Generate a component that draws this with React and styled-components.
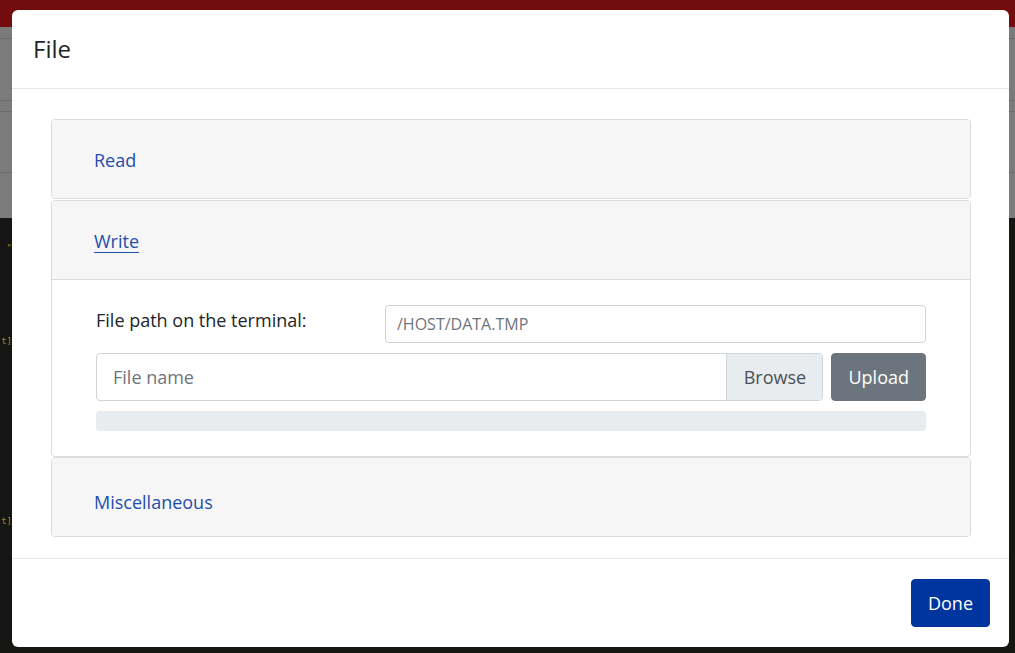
import React from 'react';
import styled, { createGlobalStyle } from 'styled-components';

const GlobalStyle = createGlobalStyle`
  html, body {
    margin: 0;
    padding: 0;
    overflow: hidden;
  }
  body {
    font-family: "Open Sans", "Noto Sans", sans-serif;
    color: #212529;
  }
  * { box-sizing: border-box; }
`;

const Page = styled.div`
  position: relative;
  width: 1015px;
  height: 653px;
  display: flex;
  flex-direction: column;
  background: #151513;
  overflow: hidden;
`;

const TopBar = styled.div`
  height: 27px;
  background: #730d0d;
`;

const GrayBand = styled.div`
  height: 191px;
  background: #7b7b7b;
  display: flex;
  flex-direction: column;
`;

const BandLine = styled.div`
  height: 1px;
  background: #6a6a6a;
  margin-top: ${p => p.$gap}px;
`;

const CodeArea = styled.div`
  flex: 1;
  width: 12px;
  display: flex;
  flex-direction: column;
  align-items: flex-end;
  font-family: "DejaVu Sans Mono", monospace;
  font-size: 9px;
  color: #8c8a3a;
  line-height: 16px;
`;

const CodeLine = styled.div`
  margin-top: ${p => p.$gap}px;
  white-space: nowrap;
`;

const Modal = styled.div`
  position: absolute;
  left: 12px;
  top: 10px;
  width: 997px;
  height: 637px;
  background: #fff;
  border-radius: 6px;
  display: flex;
  flex-direction: column;
`;

const Header = styled.div`
  height: 79px;
  padding: 0 21px;
  display: flex;
  align-items: center;
  border-bottom: 1px solid #e6e6e6;
`;

const Title = styled.h4`
  margin: 0 0 2px;
  font-size: 24px;
  font-weight: 400;
  color: #212529;
`;

const Body = styled.div`
  flex: 1;
  padding: 30px 38px 0 39px;
  border-bottom: 1px solid #e6e6e6;
`;

const Card = styled.div`
  border: 1px solid #dcdcdc;
  border-radius: 4px;
  overflow: hidden;
  margin-bottom: ${p => (p.$gap ? 1 : 0)}px;
`;

const CardHeader = styled.div`
  height: ${p => (p.$open ? 79 : 78)}px;
  background: #f6f6f6;
  padding: ${p => p.$shift || 0}px 42px 0;
  display: flex;
  align-items: center;
  border-bottom: ${p => (p.$open ? '1px solid #dcdcdc' : 'none')};
`;

const HeaderLink = styled.a`
  font-size: 18px;
  color: #1e4eab;
  text-decoration: ${p => (p.$active ? 'underline' : 'none')};
  text-underline-offset: 4px;
  cursor: pointer;
`;

const CardBody = styled.div`
  padding: 25px 44px 25px 44px;
  display: flex;
  flex-direction: column;
`;

const FieldRow = styled.div`
  display: grid;
  grid-template-columns: 289px 1fr;
  align-items: center;
`;

const Label = styled.label`
  font-size: 18px;
  color: #212529;
  margin-top: -8px;
`;

const TextInput = styled.input`
  height: 38px;
  border: 1px solid #ced4da;
  border-radius: 4px;
  padding: 0 11px;
  font-family: inherit;
  font-size: 16px;
  color: #495057;
  &::placeholder { color: #6c757d; }
`;

const UploadRow = styled.div`
  margin-top: 10px;
  display: flex;
  gap: 8px;
  height: 48px;
`;

const FileGroup = styled.div`
  flex: 1;
  display: flex;
  border: 1px solid #ced4da;
  border-radius: 4px;
  overflow: hidden;
`;

const FileName = styled.div`
  flex: 1;
  padding: 0 16px;
  display: flex;
  align-items: center;
  font-size: 18px;
  color: #6c757d;
`;

const Browse = styled.div`
  width: 96px;
  border-left: 1px solid #ced4da;
  background: #e9ecef;
  display: flex;
  align-items: center;
  justify-content: center;
  font-size: 18px;
  color: #495057;
`;

const Button = styled.button`
  height: 48px;
  padding: 0 16px;
  border: 1px solid ${p => p.$bg};
  border-radius: 4px;
  background: ${p => p.$bg};
  color: #fff;
  font-family: inherit;
  font-size: 18px;
`;

const Progress = styled.div`
  margin-top: 10px;
  height: 20px;
  background: #e9ecef;
  border-radius: 4px;
`;

const Footer = styled.div`
  height: 88px;
  padding: 0 19px;
  display: flex;
  align-items: center;
  justify-content: flex-end;
`;

export default function App() {
  return (
    <>
      <GlobalStyle />
      <Page>
        <TopBar />
        <GrayBand>
          <BandLine $gap={11} />
          <BandLine $gap={61} />
          <BandLine $gap={10} />
          <BandLine $gap={60} />
        </GrayBand>
        <CodeArea>
          <CodeLine $gap={22}>"</CodeLine>
          <CodeLine $gap={77}>t]</CodeLine>
          <CodeLine $gap={164}>t]</CodeLine>
        </CodeArea>
        <Modal>
          <Header>
            <Title>File</Title>
          </Header>
          <Body>
            <Card $gap>
              <CardHeader $shift={2}>
                <HeaderLink>Read</HeaderLink>
              </CardHeader>
            </Card>
            <Card>
              <CardHeader $open $shift={2}>
                <HeaderLink $active>Write</HeaderLink>
              </CardHeader>
              <CardBody>
                <FieldRow>
                  <Label>File path on the terminal:</Label>
                  <TextInput placeholder="/HOST/DATA.TMP" />
                </FieldRow>
                <UploadRow>
                  <FileGroup>
                    <FileName>File name</FileName>
                    <Browse>Browse</Browse>
                  </FileGroup>
                  <Button $bg="#6c757d">Upload</Button>
                </UploadRow>
                <Progress />
              </CardBody>
            </Card>
            <Card>
              <CardHeader $shift={9}>
                <HeaderLink>Miscellaneous</HeaderLink>
              </CardHeader>
            </Card>
          </Body>
          <Footer>
            <Button $bg="#00349e">Done</Button>
          </Footer>
        </Modal>
      </Page>
    </>
  );
}
